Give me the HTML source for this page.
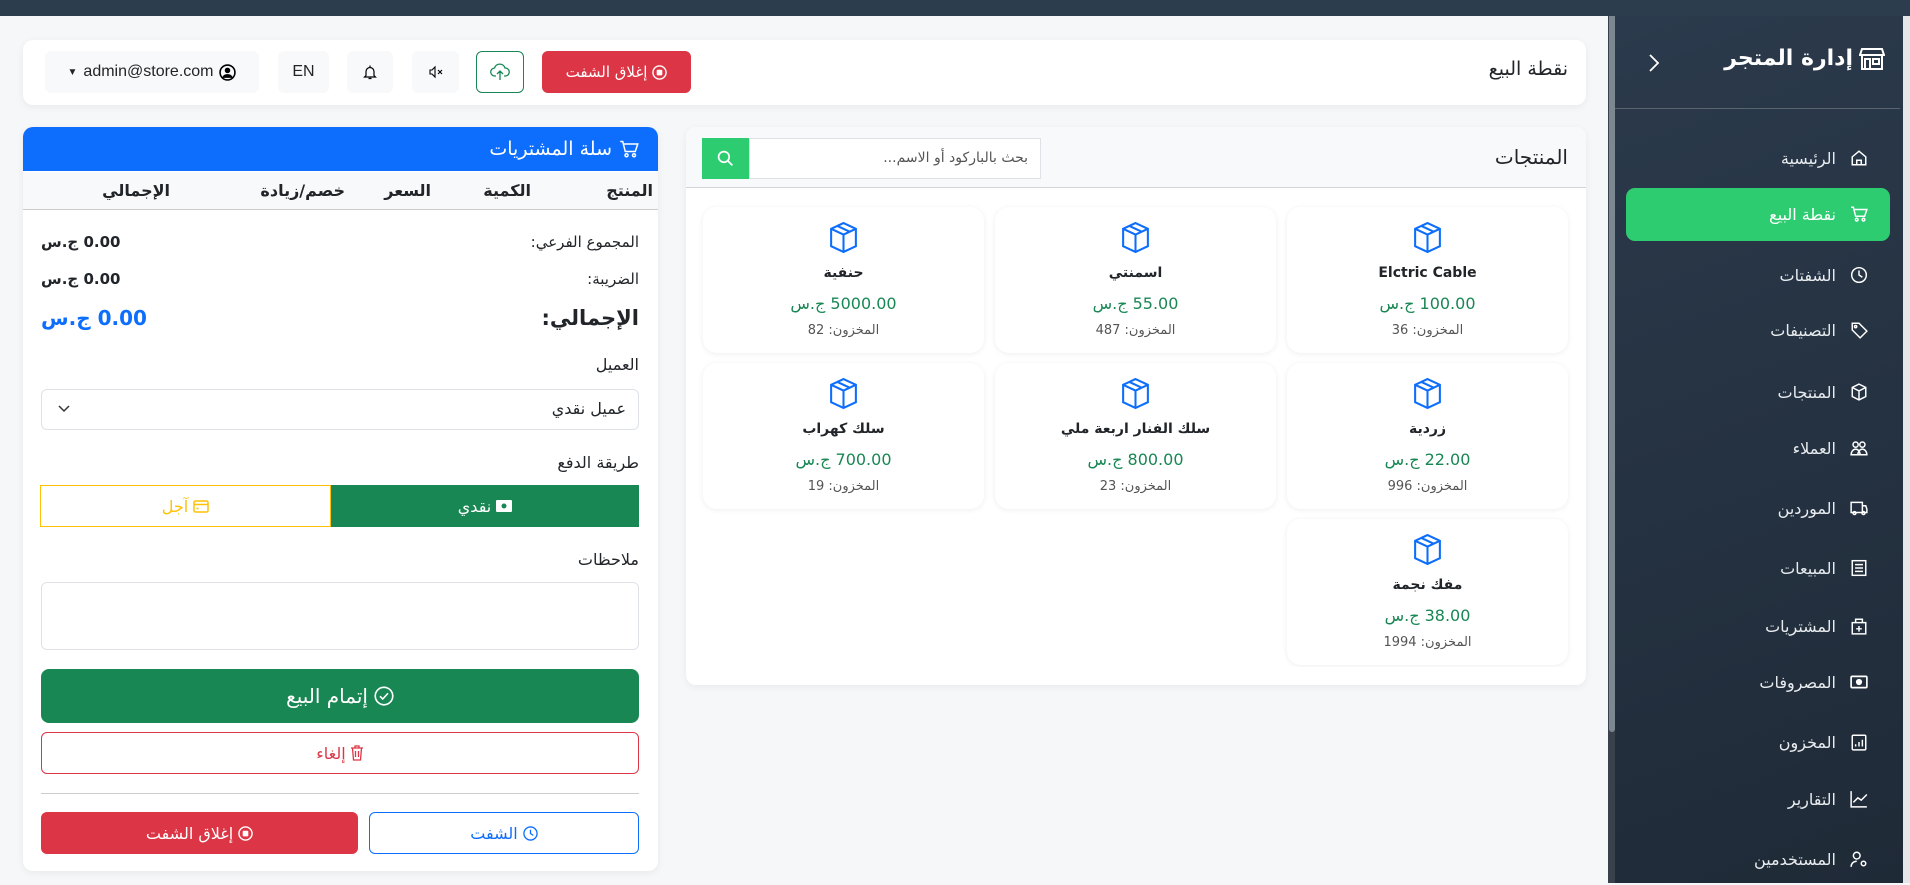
<!DOCTYPE html>
<html><head><meta charset="utf-8"><style>
*{box-sizing:border-box;margin:0;padding:0}
body{width:1910px;height:883px;overflow:hidden;background:#f5f7f9;font-family:"DejaVu Sans","Liberation Sans",sans-serif;color:#212529;position:relative}
.a{position:absolute}
.rtl{direction:rtl}
.card{background:#fff;border-radius:10px;box-shadow:0 2px 8px rgba(0,0,0,.06)}
.btn{position:absolute;display:flex;align-items:center;justify-content:center;border-radius:6px;font-size:15px}
.pc{position:absolute;width:281px;height:146px;background:#fff;border-radius:14px;box-shadow:0 1px 6px rgba(0,0,0,.07);text-align:center;direction:rtl}
.pc svg{position:absolute;left:124px;top:14px}
.pc .n{position:absolute;top:58px;width:100%;font-size:14px;font-weight:bold;color:#212529}
.pc .p{position:absolute;top:87px;width:100%;font-size:16px;color:#198754}
.pc .s{position:absolute;top:116px;width:100%;font-size:13px;color:#555}
.mi{position:absolute;left:1626px;width:264px;height:52px;display:flex;align-items:center;justify-content:flex-end;padding-right:22px;color:#e8ecef;font-size:16px;direction:ltr}
.mi svg{margin-left:14px}
</style></head><body>
<div class="a" style="left:0;top:0;width:1910px;height:16px;background:#2c3e4d"></div>
<!-- sidebar -->
<div class="a" style="left:1608px;top:16px;width:8px;height:867px;background:#39424c"></div>
<div class="a" style="left:1609px;top:16px;width:6px;height:716px;background:#7b8791;border-radius:0 0 3px 3px"></div>
<div class="a" style="left:1615px;top:16px;width:288px;height:867px;background:linear-gradient(160deg,#2b3a4c,#1f2a37)"></div>
<div class="a" style="left:1903px;top:16px;width:7px;height:867px;background:#e4e6e8"></div>
<svg class="a" style="left:1648px;top:54px" width="12" height="18" viewBox="0 0 12 18" fill="none" stroke="#fff" stroke-width="1.8"><path d="M2 1l8 8-8 8"/></svg>
<div class="a rtl" style="left:1680px;top:46px;width:205px;white-space:nowrap;color:#fff;font-size:22px;font-weight:bold;text-align:right;display:flex;align-items:center;gap:6px">
<svg width="26" height="24" viewBox="0 0 26 24" fill="none" stroke="#fff" stroke-width="2"><path d="M3 2h20l2 6H1z"/><path d="M3 9v13h20V9"/><rect x="6" y="12" width="5" height="10"/><rect x="14" y="12" width="6" height="5"/></svg>إدارة المتجر</div>
<div class="a" style="left:1615px;top:108px;width:285px;height:1px;background:#5a6470"></div>
<div class="a" style="left:1626px;top:188px;width:264px;height:53px;background:#2ecc71;border-radius:9px"></div>
<div class="mi" style="top:132px">الرئيسية<svg width="18" height="18" viewBox="0 0 16 16" fill="none" stroke="#fff" stroke-width="1.3"><path d="M2 7l6-5 6 5v7H2z"/><path d="M6 14v-4h4v4"/></svg></div>
<div class="mi" style="top:188px;color:#fff">نقطة البيع<svg width="18" height="18" viewBox="0 0 16 16" fill="none" stroke="#fff" stroke-width="1.3"><path d="M1 2h2l2 8h8l2-6H4"/><circle cx="6" cy="13" r="1.2"/><circle cx="12" cy="13" r="1.2"/></svg></div>
<div class="mi" style="top:249px">الشفتات<svg width="18" height="18" viewBox="0 0 16 16" fill="none" stroke="#fff" stroke-width="1.3"><circle cx="8" cy="8" r="6.5"/><path d="M8 4v4l3 2"/></svg></div>
<div class="mi" style="top:304px">التصنيفات<svg width="18" height="18" viewBox="0 0 16 16" fill="none" stroke="#fff" stroke-width="1.3"><path d="M2 2h6l7 7-6 6-7-7z"/><circle cx="5" cy="5" r="1"/></svg></div>
<div class="mi" style="top:366px">المنتجات<svg width="18" height="18" viewBox="0 0 16 16" fill="none" stroke="#fff" stroke-width="1.3"><path d="M8 1l6 3v8l-6 3-6-3V4z"/><path d="M2 4l6 3 6-3M8 7v8"/></svg></div>
<div class="mi" style="top:422px">العملاء<svg width="18" height="18" viewBox="0 0 16 16" fill="none" stroke="#fff" stroke-width="1.3"><circle cx="5" cy="5" r="2.3"/><circle cx="11" cy="5" r="2.3"/><path d="M1 14c0-3 2-5 4-5s4 2 4 5zM7 14c0-3 2-5 4-5s4 2 4 5z"/></svg></div>
<div class="mi" style="top:482px">الموردين<svg width="18" height="18" viewBox="0 0 16 16" fill="none" stroke="#fff" stroke-width="1.3"><path d="M1 3h10v9H1zM11 6h3l1 3v3h-4"/><circle cx="4" cy="12.5" r="1.3"/><circle cx="12" cy="12.5" r="1.3"/></svg></div>
<div class="mi" style="top:542px">المبيعات<svg width="18" height="18" viewBox="0 0 16 16" fill="none" stroke="#fff" stroke-width="1.3"><rect x="2" y="1.5" width="12" height="13"/><path d="M4.5 5h7M4.5 8h7M4.5 11h7"/></svg></div>
<div class="mi" style="top:600px">المشتريات<svg width="18" height="18" viewBox="0 0 16 16" fill="none" stroke="#fff" stroke-width="1.3"><rect x="2" y="5" width="12" height="10"/><path d="M5 5V2h6v3M8 8v5M5.5 10.5h5"/></svg></div>
<div class="mi" style="top:656px">المصروفات<svg width="18" height="18" viewBox="0 0 16 16" fill="none" stroke="#fff" stroke-width="1.5"><rect x="1" y="3" width="14" height="10" rx="1"/><circle cx="8" cy="8" r="2" fill="#fff"/></svg></div>
<div class="mi" style="top:716px">المخزون<svg width="18" height="18" viewBox="0 0 16 16" fill="none" stroke="#fff" stroke-width="1.3"><rect x="2" y="2" width="12" height="13" rx="1"/><path d="M5 12v-2M8 12V8M11 12V6"/></svg></div>
<div class="mi" style="top:773px">التقارير<svg width="18" height="18" viewBox="0 0 16 16" fill="none" stroke="#fff" stroke-width="1.3"><path d="M1 1v14h14M3 11l4-4 3 2 5-5"/></svg></div>
<div class="mi" style="top:833px">المستخدمين<svg width="18" height="18" viewBox="0 0 16 16" fill="none" stroke="#fff" stroke-width="1.3"><circle cx="6" cy="5" r="3"/><path d="M1 15c0-3 2-5 5-5"/><circle cx="12" cy="12" r="2"/></svg></div>

<!-- header -->
<div class="a card" style="left:23px;top:40px;width:1563px;height:65px"></div>
<div class="a rtl" style="left:1380px;top:58px;width:188px;text-align:right;font-size:19px">نقطة البيع</div>
<div class="btn" style="left:45px;top:51px;width:214px;height:42px;background:#f8f9fa;font-family:'Liberation Sans',sans-serif;font-size:16px;gap:6px">
<span style="font-size:10px">&#9660;</span>admin@store.com<svg width="17" height="17" viewBox="0 0 16 16"><circle cx="8" cy="8" r="7" fill="none" stroke="#000" stroke-width="1.5"/><circle cx="8" cy="6" r="2.6"/><path d="M3 13c1-3 3-3.5 5-3.5s4 .5 5 3.5"/></svg></div>
<div class="btn" style="left:278px;top:51px;width:51px;height:42px;background:#f8f9fa;font-family:'Liberation Sans',sans-serif;font-size:16px">EN</div>
<div class="btn" style="left:347px;top:51px;width:46px;height:42px;background:#f8f9fa"><svg width="16" height="17" viewBox="0 0 16 16" fill="none" stroke="#000" stroke-width="1.2"><path d="M4 11V7a4 4 0 018 0v4l1.5 1.5h-11zM6.5 14h3M8 1v2"/></svg></div>
<div class="btn" style="left:412px;top:51px;width:47px;height:42px;background:#f8f9fa"><svg width="16" height="14" viewBox="0 0 16 14" fill="none" stroke="#000" stroke-width="1.1"><path d="M2 5h2l3-3v10L4 9H2zM10 5l4 4M14 5l-4 4"/></svg></div>
<div class="btn" style="left:476px;top:51px;width:48px;height:42px;border:1px solid #198754"><svg width="20" height="18" viewBox="0 0 20 18" fill="none" stroke="#198754" stroke-width="1.3"><path d="M6 13H5a4 4 0 01-.5-8A5.5 5.5 0 0115 5a4 4 0 01.5 8H14M10 8v9M7 11l3-3 3 3"/></svg></div>
<div class="btn rtl" style="left:542px;top:51px;width:149px;height:42px;background:#dc3545;color:#fff;font-size:15px;gap:5px"><svg width="15" height="15" viewBox="0 0 16 16"><circle cx="8" cy="8" r="7" fill="none" stroke="#fff" stroke-width="1.5"/><rect x="5" y="5" width="6" height="6" rx="1" fill="#fff"/></svg>إغلاق الشفت</div>

<!-- cart -->
<div class="a card" style="left:23px;top:127px;width:635px;height:744px;overflow:hidden">
<div class="a rtl" style="left:0;top:0;width:635px;height:44px;background:#0d6efd;color:#fff;font-size:19px;padding-right:18px;display:flex;align-items:center;gap:6px"><svg width="22" height="20" viewBox="0 0 16 16" fill="none" stroke="#fff" stroke-width="1.2"><path d="M1 2h2l2 8h8l2-6H4"/><circle cx="6" cy="13" r="1.2"/><circle cx="12" cy="13" r="1.2"/></svg>سلة المشتريات</div>
<div class="a" style="left:0;top:45px;width:635px;height:38px;background:#f8f9fa;border-bottom:1px solid #ccc"></div>
<div class="a rtl" style="right:5px;top:54px;font-size:16px;font-weight:bold">المنتج</div>
<div class="a rtl" style="right:127px;top:54px;font-size:16px;font-weight:bold">الكمية</div>
<div class="a rtl" style="right:227px;top:54px;font-size:16px;font-weight:bold">السعر</div>
<div class="a rtl" style="right:313px;top:54px;font-size:16px;font-weight:bold">خصم/زيادة</div>
<div class="a rtl" style="right:488px;top:54px;font-size:16px;font-weight:bold">الإجمالي</div>
</div>
<div class="a rtl" style="left:430px;top:233px;width:209px;text-align:right;font-size:15px">المجموع الفرعي:</div>
<div class="a rtl" style="left:41px;top:233px;font-size:15px;font-weight:bold">0.00 ج.س</div>
<div class="a rtl" style="left:430px;top:270px;width:209px;text-align:right;font-size:15px">الضريبة:</div>
<div class="a rtl" style="left:41px;top:270px;font-size:15px;font-weight:bold">0.00 ج.س</div>
<div class="a rtl" style="left:430px;top:306px;width:209px;text-align:right;font-size:21px;font-weight:bold">الإجمالي:</div>
<div class="a rtl" style="left:41px;top:306px;font-size:20px;font-weight:bold;color:#0d6efd">0.00 ج.س</div>
<div class="a rtl" style="left:430px;top:355px;width:209px;text-align:right;font-size:16px">العميل</div>
<div class="a rtl" style="left:41px;top:389px;width:598px;height:41px;border:1px solid #dee2e6;border-radius:6px;font-size:16px;padding:9px 12px 0 0">عميل نقدي</div>
<svg class="a" style="left:58px;top:405px" width="12" height="8" viewBox="0 0 12 8" fill="none" stroke="#333" stroke-width="1.5"><path d="M1 1l5 5 5-5"/></svg>
<div class="a rtl" style="left:430px;top:453px;width:209px;text-align:right;font-size:16px">طريقة الدفع</div>
<div class="btn rtl" style="left:331px;top:485px;width:308px;height:42px;background:#198754;color:#fff;border-radius:0;font-size:16px;gap:5px"><svg width="16" height="12" viewBox="0 0 16 12"><rect x="0" y="0" width="16" height="12" rx="1" fill="#fff"/><circle cx="8" cy="6" r="2.5" fill="#198754"/></svg>نقدي</div>
<div class="btn rtl" style="left:40px;top:485px;width:291px;height:42px;border:1px solid #ffc107;color:#ffc107;border-radius:0;font-size:16px;gap:5px"><svg width="16" height="13" viewBox="0 0 16 13" fill="none" stroke="#ffc107" stroke-width="1.5"><rect x="1" y="1" width="14" height="11" rx="1.5"/><path d="M1 4.5h14M3.5 8.5h2"/></svg>آجل</div>
<div class="a rtl" style="left:430px;top:550px;width:209px;text-align:right;font-size:16px">ملاحظات</div>
<div class="a" style="left:41px;top:582px;width:598px;height:68px;border:1px solid #dee2e6;border-radius:6px"></div>
<div class="btn rtl" style="left:41px;top:669px;width:598px;height:54px;background:#198754;color:#fff;font-size:20px;border-radius:8px;gap:6px"><svg width="20" height="20" viewBox="0 0 16 16" fill="none" stroke="#fff" stroke-width="1.3"><circle cx="8" cy="8" r="7"/><path d="M4.8 8.2l2.2 2.2 4.2-4.6"/></svg>إتمام البيع</div>
<div class="btn rtl" style="left:41px;top:732px;width:598px;height:42px;border:1px solid #dc3545;color:#dc3545;font-size:16px;gap:4px"><svg width="14" height="16" viewBox="0 0 14 16" fill="none" stroke="#dc3545" stroke-width="1.3"><path d="M1 3h12M5 3V1h4v2M2.5 3l1 12h7l1-12M5.5 6v6M8.5 6v6"/></svg>إلغاء</div>
<div class="a" style="left:41px;top:793px;width:598px;height:1px;background:#ccc"></div>
<div class="btn rtl" style="left:41px;top:812px;width:317px;height:42px;background:#dc3545;color:#fff;font-size:16px;gap:5px"><svg width="15" height="15" viewBox="0 0 16 16"><circle cx="8" cy="8" r="7" fill="none" stroke="#fff" stroke-width="1.5"/><rect x="5" y="5" width="6" height="6" rx="1" fill="#fff"/></svg>إغلاق الشفت</div>
<div class="btn rtl" style="left:369px;top:812px;width:270px;height:42px;border:1px solid #0d6efd;color:#0d6efd;font-size:16px;gap:5px"><svg width="15" height="15" viewBox="0 0 16 16" fill="none" stroke="#0d6efd" stroke-width="1.4"><circle cx="8" cy="8" r="7"/><path d="M8 4v4l3 2"/></svg>الشفت</div>

<!-- products -->
<div class="a card" style="left:686px;top:127px;width:900px;height:558px;overflow:hidden">
<div class="a" style="left:0;top:0;width:900px;height:61px;background:#f8f9fa;border-bottom:1px solid #d5d5d5"></div>
</div>
<div class="a rtl" style="left:1400px;top:145px;width:168px;text-align:right;font-size:20px">المنتجات</div>
<div class="a" style="left:702px;top:138px;width:47px;height:41px;background:#2ecc71;display:flex;align-items:center;justify-content:center"><svg width="17" height="17" viewBox="0 0 16 16" fill="none" stroke="#fff" stroke-width="1.6"><circle cx="6.5" cy="6.5" r="5"/><path d="M10.2 10.2l4.3 4.3"/></svg></div>
<div class="a rtl" style="left:749px;top:138px;width:292px;height:41px;border:1px solid #dee2e6;background:#fff;font-size:14px;color:#555;padding:11px 12px 0 0">بحث بالباركود أو الاسم...</div>

<div class="a" style="left:695px;top:200px;width:880px;height:467px;overflow:hidden">
<div id="grid" style="position:relative;left:-695px;top:-200px"></div>
</div>
<script>
var box='<svg width="33" height="33" viewBox="0 0 16 16" fill="none" stroke="#0d6efd" stroke-width="1"><path d="M8 1l6 2.8v8.4L8 15l-6-2.8V3.8z"/><path d="M2 3.8L8 6.6l6-2.8M8 6.6V15M5 2.4l6 2.8"/></svg>';
var P=[[1287,207,'Elctric Cable','100.00','36'],[995,207,'اسمنتي','55.00','487'],[703,207,'حنفية','5000.00','82'],
[1287,363,'زردية','22.00','996'],[995,363,'سلك الفنار اربعة ملي','800.00','23'],[703,363,'سلك كهراب','700.00','19'],
[1287,519,'مفك نجمة','38.00','1994']];
var h='';P.forEach(function(p){h+='<div class="pc" style="left:'+p[0]+'px;top:'+p[1]+'px">'+box+'<div class="n">'+p[2]+'</div><div class="p">'+p[3]+' ج.س</div><div class="s">المخزون: '+p[4]+'</div></div>';});
document.getElementById('grid').innerHTML=h;
</script>
</body></html>
